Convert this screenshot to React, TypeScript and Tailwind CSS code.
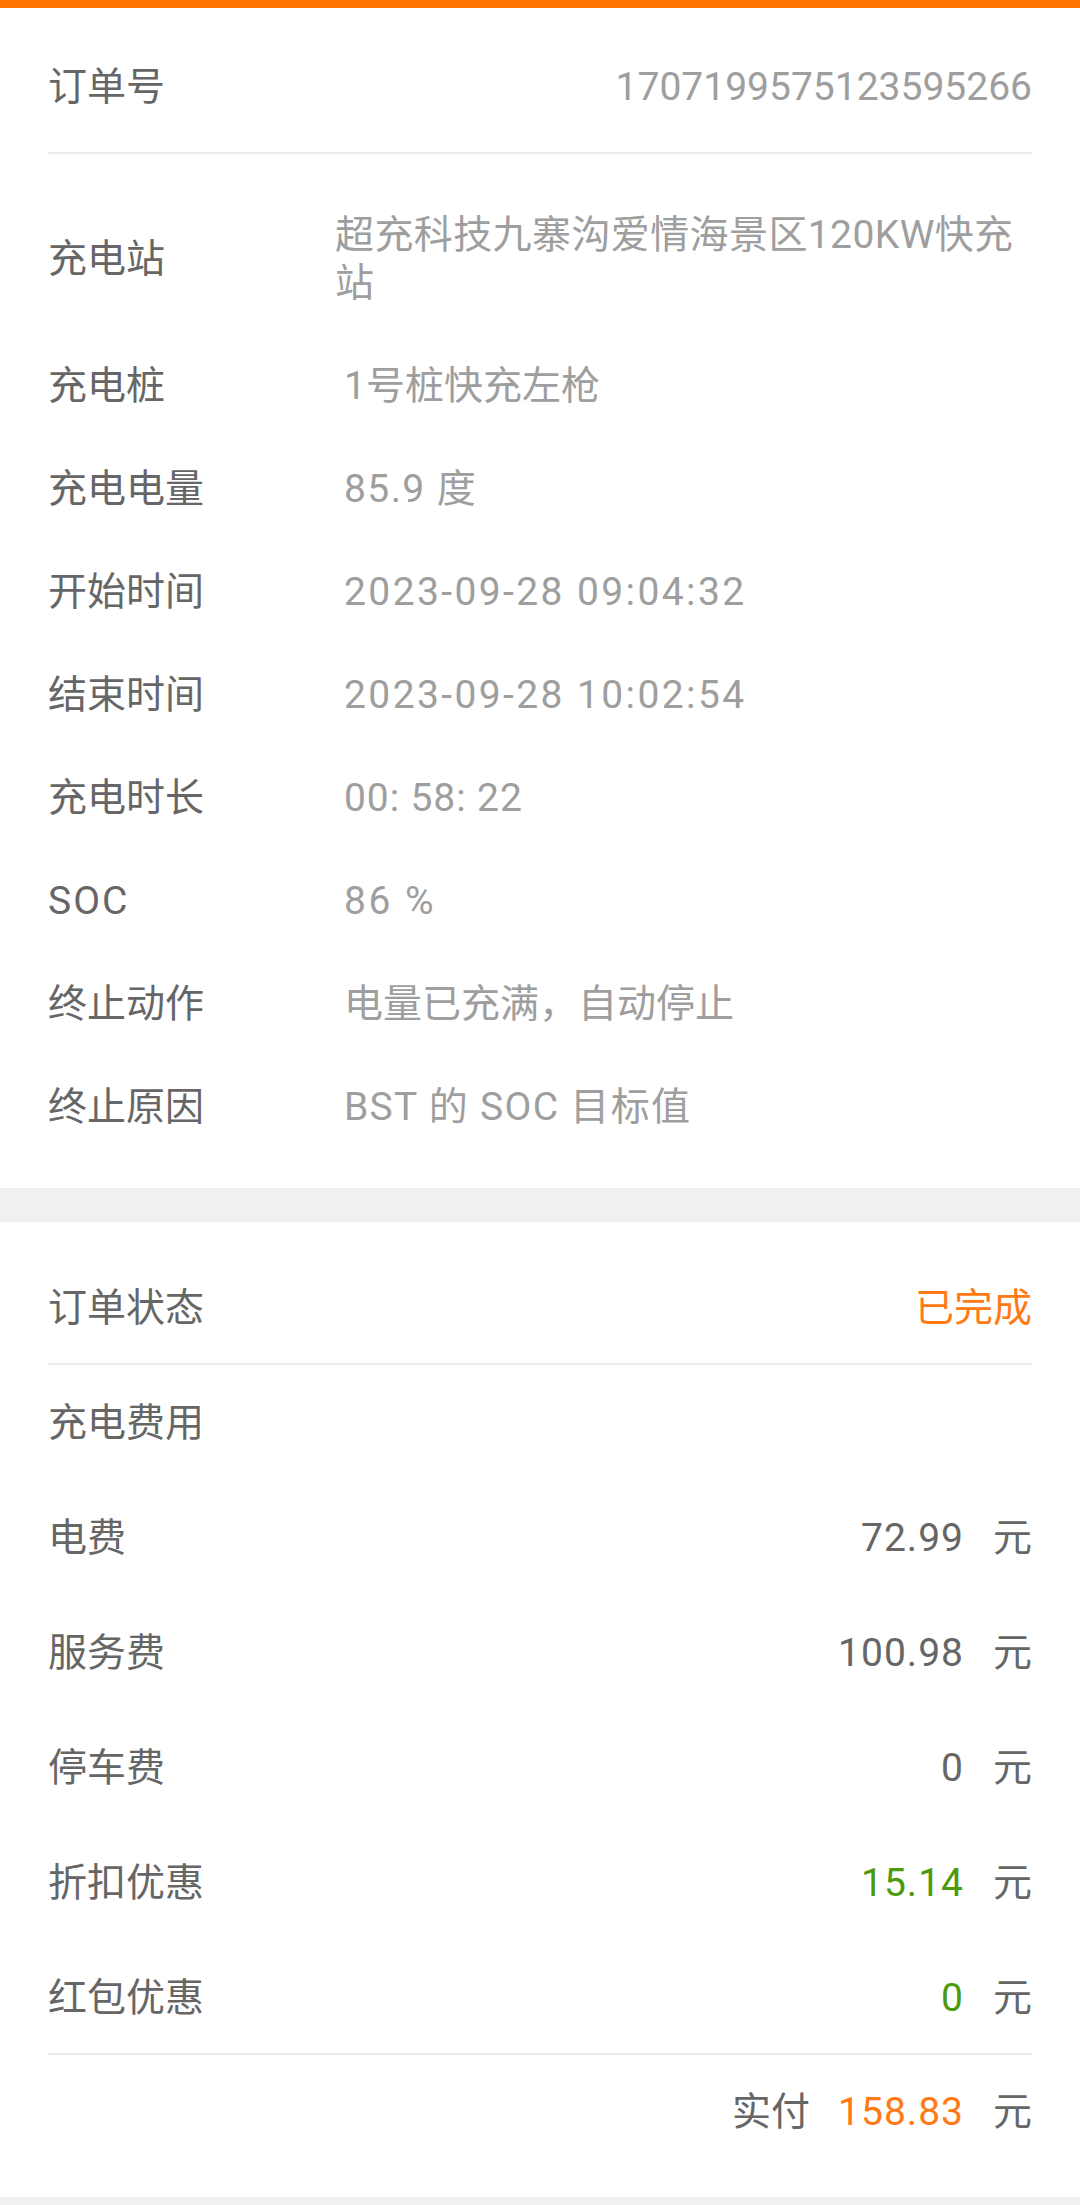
const font = { fontFamily: '"Roboto", "Noto Sans CJK SC", sans-serif' }

const details = [
  { label: "充电桩", value: "1号桩快充左枪", track: "" },
  { label: "充电电量", value: "85.9 度", track: "tracking-[1.4px]" },
  { label: "开始时间", value: "2023-09-28 09:04:32", track: "tracking-[2.4px]" },
  { label: "结束时间", value: "2023-09-28 10:02:54", track: "tracking-[2.4px]" },
  { label: "充电时长", value: "00: 58: 22", track: "tracking-[0.9px]" },
  { label: "SOC", value: "86 %", track: "tracking-[2.5px]" },
  { label: "终止动作", value: "电量已充满，自动停止", track: "" },
  { label: "终止原因", value: "BST 的 SOC 目标值", track: "tracking-[1.3px]" },
]

const fees = [
  { label: "电费", amount: "72.99", color: "text-[#666666]" },
  { label: "服务费", amount: "100.98", color: "text-[#666666]" },
  { label: "停车费", amount: "0", color: "text-[#666666]" },
  { label: "折扣优惠", amount: "15.14", color: "text-[#4c9a0c]" },
  { label: "红包优惠", amount: "0", color: "text-[#4c9a0c]" },
]

function Amount({ amount, color }: { amount: string; color: string }) {
  return (
    <div className="flex items-center gap-[29px]">
      <span className={`${color} tracking-[1px]`}>{amount}</span>
      <span className="text-[#666666]">元</span>
    </div>
  )
}

export default function App() {
  return (
    <div
      className="min-h-[2205px] w-[1080px] bg-[#f0f0f0] text-[39px] leading-[48px] text-[#666666]"
      style={font}
    >
      <div className="h-[8px] bg-[#ff7300]" />

      {/* charging details */}
      <div className="bg-white px-12">
        <div className="flex items-center justify-between pt-[55px] pb-[41px]">
          <span>订单号</span>
          <span className="text-[#9e9e9e]">1707199575123595266</span>
        </div>
        <div className="h-[2px] bg-[#ebebeb]" />

        <div className="flex flex-col gap-[55px] pt-[57px] pb-[57px]">
          <div className="flex items-center">
            <span className="w-[287px] shrink-0">充电站</span>
            <span className="text-[#9e9e9e] tracking-[0.4px]">
              超充科技九寨沟爱情海景区120KW快充
              <br />站
            </span>
          </div>
          {details.map((d) => (
            <div key={d.label} className="flex items-center">
              <span className={`w-[296px] shrink-0 ${d.label === "SOC" ? "tracking-[2px]" : ""}`}>
                {d.label}
              </span>
              <span className={`text-[#9e9e9e] ${d.track}`}>{d.value}</span>
            </div>
          ))}
        </div>
      </div>

      <div className="h-[34px]" />

      {/* order & fees */}
      <div className="bg-white px-12">
        <div className="flex items-center justify-between pt-[62px] pb-[31px]">
          <span>订单状态</span>
          <span className="text-[#ff7a14]">已完成</span>
        </div>
        <div className="h-[2px] bg-[#ebebeb]" />

        <div className="flex flex-col gap-[67px] pt-[34px] pb-[31px]">
          <div>充电费用</div>
          {fees.map((f) => (
            <div key={f.label} className="flex items-center justify-between">
              <span>{f.label}</span>
              <Amount amount={f.amount} color={f.color} />
            </div>
          ))}
        </div>
        <div className="h-[2px] bg-[#ebebeb]" />

        <div className="flex items-center justify-end gap-[28px] pt-[33px] pb-[61px]">
          <span>实付</span>
          <Amount amount="158.83" color="text-[#ff7a14]" />
        </div>
      </div>
    </div>
  )
}
